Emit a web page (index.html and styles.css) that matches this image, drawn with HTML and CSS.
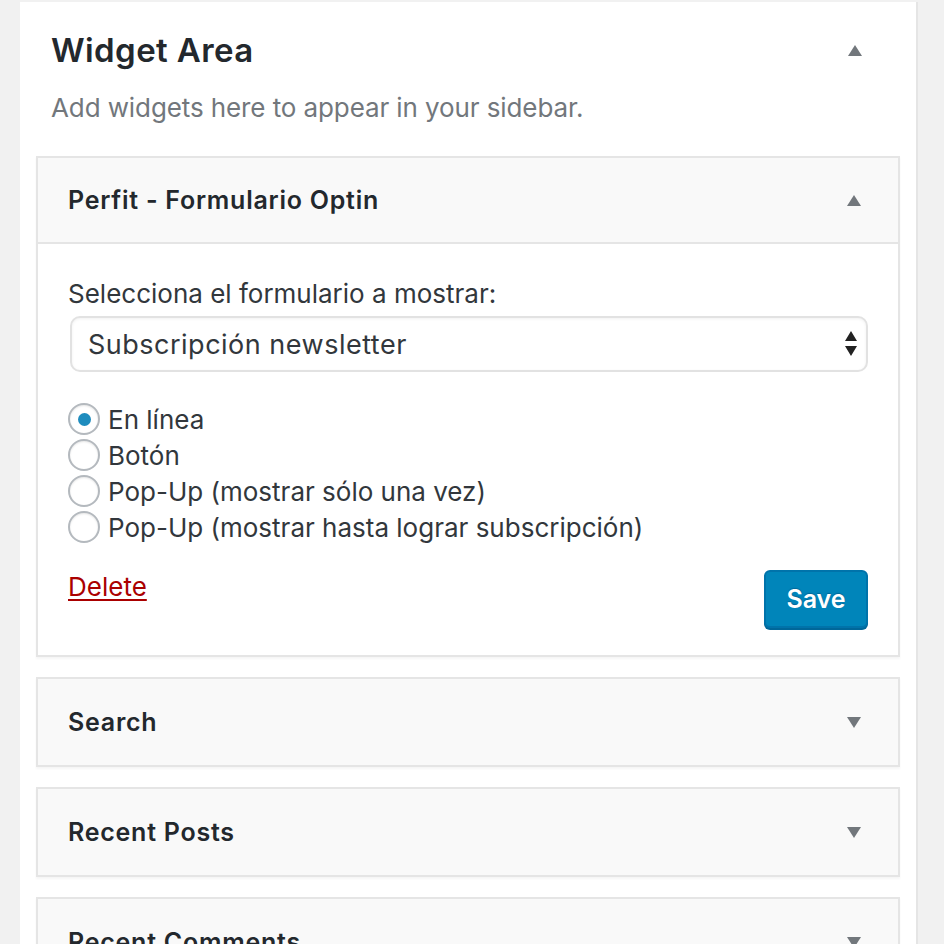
FILE: index.html
```html
<!DOCTYPE html>
<html>
<head>
<meta charset="utf-8">
<link rel="stylesheet" href="styles.css">
</head>
<body>
<div class="sidebar">
  <div class="area-head">
    <h2 class="area-title">Widget Area</h2>
    <span class="tri tri-up"></span>
  </div>
  <p class="area-desc">Add widgets here to appear in your sidebar.</p>

  <div class="widget open">
    <div class="widget-top">
      <h3 class="widget-title">Perfit - Formulario Optin</h3>
      <span class="tri tri-up"></span>
    </div>
    <div class="widget-inside">
      <label class="field-label">Selecciona el formulario a mostrar:</label>
      <div class="select">
        <span class="select-value">Subscripción newsletter</span>
        <span class="select-arrows">
          <svg width="14" height="26" viewBox="0 0 14 26"><path d="M7 0 L13 10 L1 10 Z M1 15 L13 15 L7 25 Z" fill="#222"/></svg>
        </span>
      </div>
      <div class="radios">
        <div class="radio-row"><span class="radio checked"></span><span>En línea</span></div>
        <div class="radio-row"><span class="radio"></span><span>Botón</span></div>
        <div class="radio-row"><span class="radio"></span><span>Pop-Up (mostrar sólo una vez)</span></div>
        <div class="radio-row"><span class="radio"></span><span>Pop-Up (mostrar hasta lograr subscripción)</span></div>
      </div>
      <div class="actions">
        <a class="delete" href="#">Delete</a>
        <button class="save">Save</button>
      </div>
    </div>
  </div>

  <div class="widget">
    <div class="widget-top">
      <h3 class="widget-title">Search</h3>
      <span class="tri tri-down"></span>
    </div>
  </div>
  <div class="widget">
    <div class="widget-top">
      <h3 class="widget-title">Recent Posts</h3>
      <span class="tri tri-down"></span>
    </div>
  </div>
  <div class="widget">
    <div class="widget-top">
      <h3 class="widget-title">Recent Comments</h3>
      <span class="tri tri-down"></span>
    </div>
  </div>
</div>
</body>
</html>
```

FILE: styles.css
```css
* { box-sizing: border-box; }
html, body { margin: 0; padding: 0; }
body {
  background: #f1f1f1;
  font-family: Inter, Roboto, "Liberation Sans", sans-serif;
  color: #23282d;
  height: 944px;
  overflow: hidden;
}
.sidebar {
  margin: 2px 0 0 20px;
  width: 898px;
  background: #fff;
  border-right: 2px solid #e5e5e5;
  padding: 0 16px 40px 16px;
  min-height: 1000px;
}
.area-head {
  display: flex;
  align-items: center;
  justify-content: space-between;
  height: 96px;
  padding: 0 38px 0 15px;
}
.area-title {
  margin: 0;
  font-size: 33px;
  font-weight: 600;
  letter-spacing: 0.4px;
  color: #23282d;
}
.area-desc {
  margin: 0 0 0 15px;
  height: 58px;
  padding-top: 0;
  font-size: 26px;
  letter-spacing: -0.1px;
  line-height: 20px;
  color: #72777c;
}
.tri {
  width: 0;
  height: 0;
  border-left: 7.5px solid transparent;
  border-right: 7.5px solid transparent;
}
.tri-up { border-bottom: 11px solid #72777c; }
.tri-down { border-top: 11px solid #72777c; }
.widget {
  border: 2px solid #e5e5e5;
  background: #f9f9f9;
  margin-bottom: 20px;
  box-shadow: 0 2px 2px rgba(0,0,0,0.04);
}
.widget-top {
  display: flex;
  align-items: center;
  justify-content: space-between;
  height: 86px;
  padding: 0 37px 0 30px;
}
.widget-title {
  margin: 0;
  font-size: 25px;
  font-weight: 600;
  letter-spacing: 0.75px;
  color: #23282d;
}
.open .widget-top { border-bottom: 2px solid #e5e5e5; }
.widget-inside {
  background: #fff;
  padding: 32px 30px 27px 30px;
}
.field-label {
  display: block;
  font-size: 26px;
  line-height: 36px;
  color: #32373c;
}
.select {
  margin: 4px 0 0 2px;
  height: 56px;
  border: 2px solid #e2e2e2;
  border-radius: 10px;
  box-shadow: inset 0 1px 3px rgba(0,0,0,0.06);
  display: flex;
  align-items: center;
  justify-content: space-between;
  padding: 0 8px 0 16px;
  background: #fff;
}
.select-value {
  font-size: 27px;
  letter-spacing: 0.5px;
  color: #32373c;
}
.select-arrows { display: flex; align-items: center; }
.radios {
  margin-top: 29px;
  display: flex;
  flex-direction: column;
}
.radio-row {
  display: flex;
  align-items: center;
  height: 36px;
  font-size: 26px;
  color: #32373c;
  gap: 8px;
}
.radio {
  width: 32px;
  height: 32px;
  border-radius: 50%;
  border: 2px solid #b4b9be;
  background: #fff;
  box-shadow: inset 0 1px 2px rgba(0,0,0,0.1);
  display: flex;
  align-items: center;
  justify-content: center;
}
.radio.checked::after {
  content: "";
  width: 13px;
  height: 13px;
  border-radius: 50%;
  background: #1e8cbe;
}
.actions {
  margin-top: 25px;
  display: flex;
  justify-content: space-between;
  align-items: flex-start;
}
.delete {
  color: #a00;
  font-size: 26px;
  text-decoration: underline;
  text-underline-offset: 3px;
  text-decoration-thickness: 2px;
  margin-top: 1px;
}
.save {
  width: 104px;
  height: 58px;
  background: #0085ba;
  border: 2px solid #0073aa;
  border-radius: 6px;
  box-shadow: 0 2px 0 #006799;
  color: #fff;
  font-family: inherit;
  font-size: 25px;
  font-weight: 600;
  padding: 0;
  text-shadow: 0 -1px 1px #006799;
}
```
